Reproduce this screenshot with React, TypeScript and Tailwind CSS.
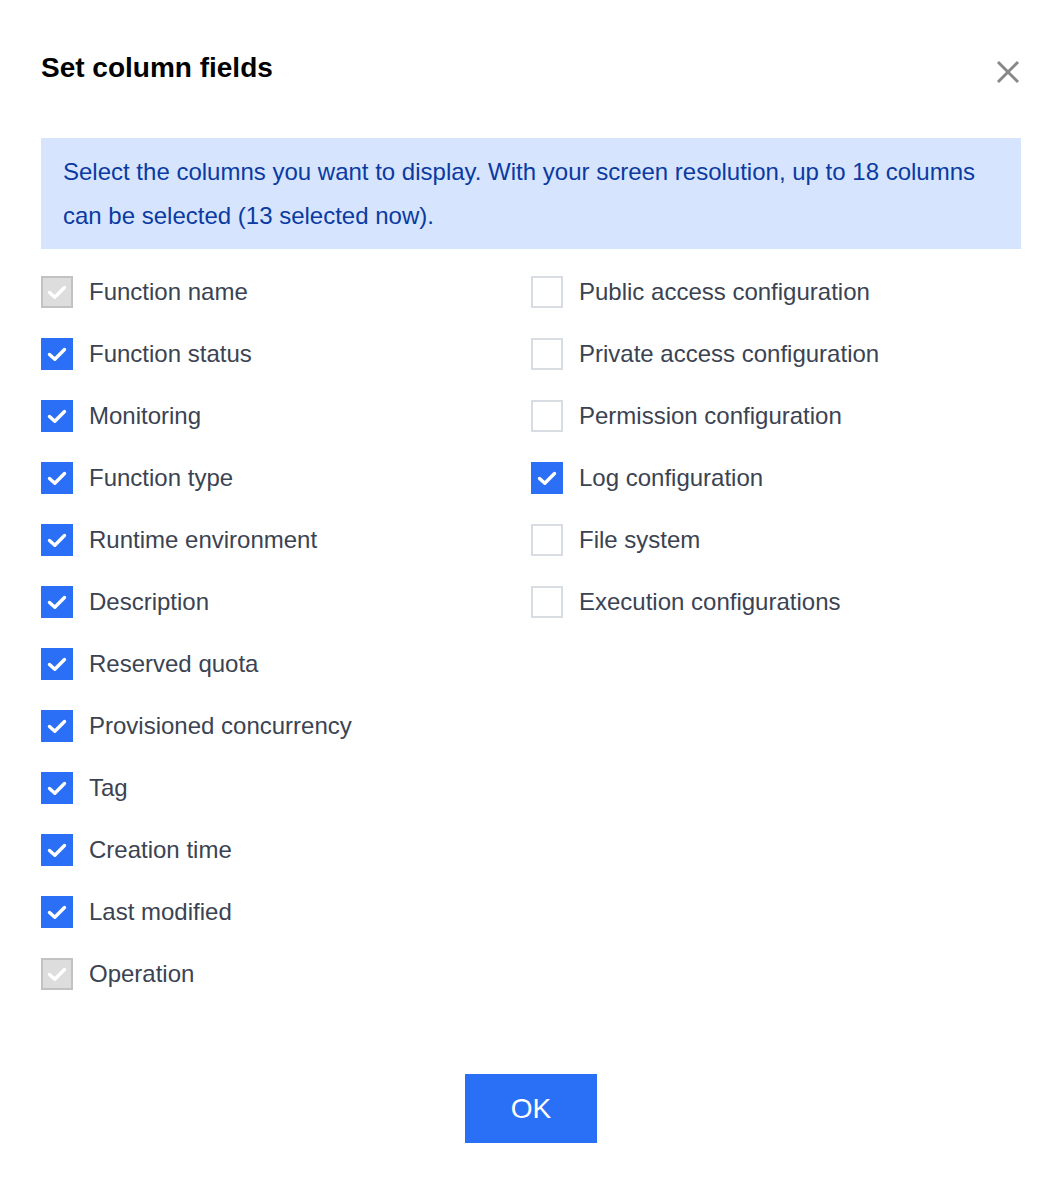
import React from "react";

type Item = { label: string; state: "disabled" | "checked" | "unchecked" };

const left: Item[] = [
  { label: "Function name", state: "disabled" },
  { label: "Function status", state: "checked" },
  { label: "Monitoring", state: "checked" },
  { label: "Function type", state: "checked" },
  { label: "Runtime environment", state: "checked" },
  { label: "Description", state: "checked" },
  { label: "Reserved quota", state: "checked" },
  { label: "Provisioned concurrency", state: "checked" },
  { label: "Tag", state: "checked" },
  { label: "Creation time", state: "checked" },
  { label: "Last modified", state: "checked" },
  { label: "Operation", state: "disabled" },
];

const right: Item[] = [
  { label: "Public access configuration", state: "unchecked" },
  { label: "Private access configuration", state: "unchecked" },
  { label: "Permission configuration", state: "unchecked" },
  { label: "Log configuration", state: "checked" },
  { label: "File system", state: "unchecked" },
  { label: "Execution configurations", state: "unchecked" },
];

function Check() {
  return (
    <svg width="22" height="22" viewBox="0 0 22 22" fill="none">
      <path d="M3.5 11.5 L8.8 16.3 L18.5 6.5" stroke="white" strokeWidth="3.4" strokeLinecap="round" strokeLinejoin="round" />
    </svg>
  );
}

function Box({ state }: { state: Item["state"] }) {
  if (state === "checked")
    return (
      <div className="w-8 h-8 shrink-0 bg-[#2a6ff6] flex items-center justify-center">
        <Check />
      </div>
    );
  if (state === "disabled")
    return (
      <div className="w-8 h-8 shrink-0 bg-[#dddddd] border-2 border-[#c2c2c2] flex items-center justify-center">
        <Check />
      </div>
    );
  return <div className="w-8 h-8 shrink-0 bg-white border-2 border-[#d8dce3]" />;
}

function Row({ item }: { item: Item }) {
  return (
    <div className="h-[62px] flex items-center">
      <Box state={item.state} />
      <span className="ml-4 text-[24px] text-[#3b4352] leading-none">{item.label}</span>
    </div>
  );
}

export default function App() {
  return (
    <div
      className="w-[1060px] h-[1188px] bg-white pl-[41px] pr-[39px] flex flex-col"
      style={{ fontFamily: '"Liberation Sans", Arial, sans-serif' }}
    >
      <div className="flex items-center justify-between h-[138px] pb-[2px]">
        <h1 className="text-[28px] font-bold text-black leading-none -mt-[1px]">Set column fields</h1>
        <svg width="26" height="26" viewBox="0 0 26 26" className="mr-[0px] mt-[8px]">
          <path d="M3 3 L23 23 M23 3 L3 23" stroke="#888888" strokeWidth="3" />
        </svg>
      </div>
      <div className="bg-[#d6e5fd] pl-[22px] pr-4 pt-[12px] pb-[11px] text-[24px] leading-[44px] text-[#0b3aa2]">
        Select the columns you want to display. With your screen resolution, up to 18 columns can be selected (13 selected now).
      </div>
      <div className="grid grid-cols-2 mt-[12px]">
        <div className="flex flex-col">
          {left.map((i) => (
            <Row key={i.label} item={i} />
          ))}
        </div>
        <div className="flex flex-col">
          {right.map((i) => (
            <Row key={i.label} item={i} />
          ))}
        </div>
      </div>
      <div className="flex justify-center mt-[69px]">
        <button className="w-[132px] h-[69px] bg-[#2a70f6] text-white text-[28px] leading-none">OK</button>
      </div>
    </div>
  );
}
